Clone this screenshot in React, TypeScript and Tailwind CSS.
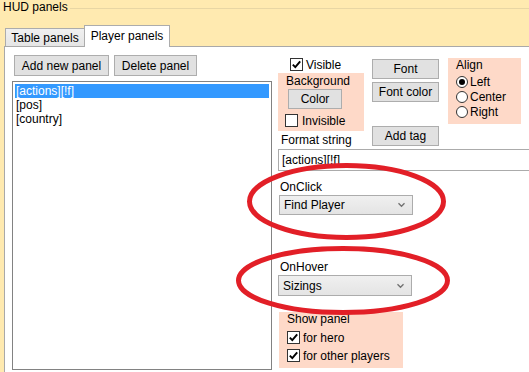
import React from "react";

function Check({ checked }: { checked: boolean }) {
  return (
    <span className="inline-flex h-[13px] w-[13px] shrink-0 items-center justify-center border border-[#333333] bg-white">
      {checked && (
        <svg width="11" height="11" viewBox="0 0 11 11">
          <path d="M1.8 5.6 L4.3 8.2 L9.2 2.4" fill="none" stroke="#000" strokeWidth="1.9" />
        </svg>
      )}
    </span>
  );
}

function Radio({ checked }: { checked: boolean }) {
  return (
    <span className="inline-flex h-[12px] w-[12px] shrink-0 items-center justify-center rounded-full border border-[#333333] bg-white">
      {checked && <span className="h-[6px] w-[6px] rounded-full bg-black" />}
    </span>
  );
}

function Btn({ children, className }: { children: React.ReactNode; className: string }) {
  return (
    <div
      className={
        "flex items-center justify-center border border-[#adadad] bg-[#e1e1e1] leading-none text-black " +
        className
      }
    >
      {children}
    </div>
  );
}

function Select({ value, className }: { value: string; className: string }) {
  return (
    <div
      className={
        "flex items-center border border-[#acacac] bg-gradient-to-b from-[#f0f0f0] to-[#e4e4e4] pl-[4px] pr-[6px] " +
        className
      }
    >
      <span className="flex-1 leading-none">{value}</span>
      <svg width="9" height="6" viewBox="0 0 9 6">
        <path d="M1.5 1.2 L4.5 4.3 L7.5 1.2" fill="none" stroke="#707070" strokeWidth="1.3" />
      </svg>
    </div>
  );
}

export default function App() {
  return (
    <div
      className="relative flex h-[372px] w-[529px] flex-col overflow-hidden bg-[#ffeab0] text-[12px] text-black"
      style={{ fontFamily: '"Liberation Sans", Arial, sans-serif' }}
    >
      {/* group header */}
      <div className="flex h-[25px] items-start">
        <span className="pl-[3px] pt-[1px] leading-[13px]">HUD panels</span>
        <div className="ml-[2px] mt-[8px] h-px flex-1 bg-[#e8d6a4]" />
      </div>

      {/* tab strip */}
      <div className="flex h-[21px] items-end pl-[5px]">
        <div className="flex h-[18px] w-[79px] items-center justify-center border-l border-t border-[#acacac] bg-gradient-to-b from-[#f0f0f0] to-[#e5e5e5] leading-none">
          Table panels
        </div>
        <div className="relative z-10 -mb-px flex h-[22px] w-[86px] items-center justify-center border-l border-r border-t border-[#acacac] bg-white pb-[2px] leading-none">
          Player panels
        </div>
      </div>

      {/* tab page */}
      <div className="ml-[4px] flex flex-1 border-l border-t border-[#a9a9a9] bg-white">
        {/* left column */}
        <div className="flex flex-col pb-[2px] pl-[7px] pt-[8px]">
          <div className="ml-[2px] flex gap-[5px]">
            <Btn className="h-[21px] w-[95px]">Add new panel</Btn>
            <Btn className="h-[21px] w-[83px]">Delete panel</Btn>
          </div>
          <div className="mt-[5px] w-[260px] flex-1 border border-[#828282] px-[2px] pt-[2px] leading-[14px]">
            <div className="bg-[#3399ff] pl-px text-white">[actions][!f]</div>
            <div className="pl-px">[pos]</div>
            <div className="pl-px">[country]</div>
          </div>
        </div>

        {/* right column */}
        <div className="ml-[6px] flex flex-1 flex-col pt-[8px]">
          <div className="flex items-start">
            {/* col 1 */}
            <div className="flex w-[86px] flex-col">
              <div className="mt-[3px] flex h-[13px] items-center gap-[3px] pl-[12px]">
                <Check checked />
                <span className="leading-none">Visible</span>
              </div>
              <div className="mt-[2px] flex h-[58px] flex-col bg-[#fed9c8] pl-[8px]">
                <span className="pt-[2px] leading-[13px]">Background</span>
                <Btn className="mt-[1px] ml-[2px] h-[20px] w-[54px]">Color</Btn>
                <div className="-ml-px mt-[5px] flex items-center gap-[4px]">
                  <Check checked={false} />
                  <span className="leading-none">Invisible</span>
                </div>
              </div>
              <span className="mt-[2px] pl-[3px] leading-[14px]">Format string</span>
            </div>
            {/* col 2 */}
            <div className="ml-[8px] flex w-[67px] flex-col">
              <Btn className="mt-[4px] h-[20px] w-[67px]">Font</Btn>
              <Btn className="mt-[3px] h-[20px] w-[67px]">Font color</Btn>
              <Btn className="mt-[24px] h-[20px] w-[67px]">Add tag</Btn>
            </div>
            {/* col 3 */}
            <div className="ml-[9px] mt-[3px] flex h-[66px] w-[73px] flex-col bg-[#fed9c8] pl-[8px]">
              <span className="pt-[1px] leading-[13px]">Align</span>
              <div className="mt-[3px] flex h-[13px] items-center gap-[2px]">
                <Radio checked />
                <span className="leading-none">Left</span>
              </div>
              <div className="mt-[2px] flex h-[13px] items-center gap-[2px]">
                <Radio checked={false} />
                <span className="leading-none">Center</span>
              </div>
              <div className="mt-[2px] flex h-[13px] items-center gap-[2px]">
                <Radio checked={false} />
                <span className="leading-none">Right</span>
              </div>
            </div>
          </div>

          {/* format string textbox */}
          <div className="-mr-[4px] mt-[2px] flex h-[22px] items-center border border-r-0 border-[#ababab] pl-[3px]">
            <span className="leading-none">[actions][!f]</span>
          </div>

          <span className="mt-[10px] pl-[2px] leading-[13px]">OnClick</span>
          <Select value="Find Player" className="mt-[1px] ml-px h-[20px] w-[134px]" />

          <span className="mt-[46px] pl-[2px] leading-[13px]">OnHover</span>
          <Select value="Sizings" className="mt-[1px] h-[21px] w-[134px]" />

          <div className="ml-px mt-[16px] flex h-[56px] w-[124px] flex-col bg-[#fed9c8] pl-[8px]">
            <span className="pt-px leading-[13px]">Show panel</span>
            <div className="mt-[5px] flex h-[13px] items-center gap-[3px]">
              <Check checked />
              <span className="leading-none">for hero</span>
            </div>
            <div className="mt-[5px] flex h-[13px] items-center gap-[3px]">
              <Check checked />
              <span className="leading-none">for other players</span>
            </div>
          </div>
        </div>
      </div>

      {/* red hand-drawn ellipses */}
      <svg
        className="pointer-events-none absolute left-0 top-0"
        width="529"
        height="372"
        viewBox="0 0 529 372"
      >
        <ellipse cx="346.5" cy="201.5" rx="97" ry="36" fill="none" stroke="#e21f27" strokeWidth="5" />
        <ellipse cx="343" cy="280.5" rx="104.5" ry="32" fill="none" stroke="#e21f27" strokeWidth="5" />
      </svg>
    </div>
  );
}
